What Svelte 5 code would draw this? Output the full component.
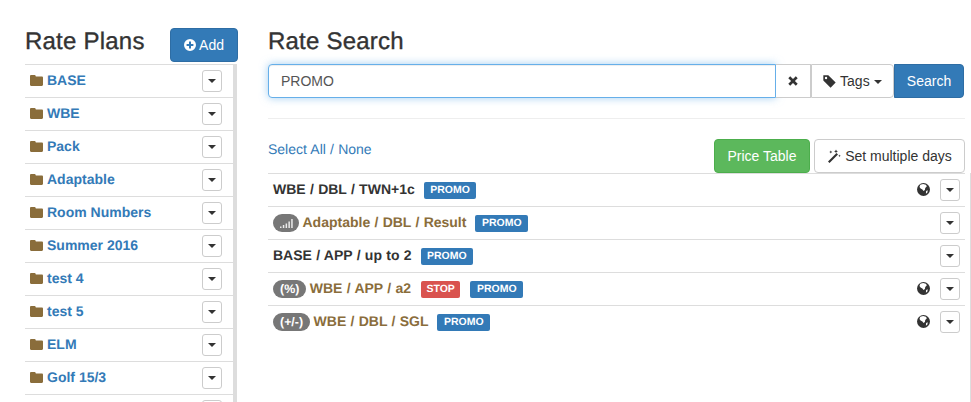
<script lang="ts">
	// last row is only peeking in at the bottom, its name is out of view
	const plans = ['BASE', 'WBE', 'Pack', 'Adaptable', 'Room Numbers', 'Summer 2016', 'test 4', 'test 5', 'ELM', 'Golf 15/3', ''];

	interface Rate {
		name: string;
		pill?: string;
		bars?: boolean;
		stop?: boolean;
		globe?: boolean;
	}

	const rates: Rate[] = [
		{ name: 'WBE / DBL / TWN+1c', globe: true },
		{ name: 'Adaptable / DBL / Result', bars: true },
		{ name: 'BASE / APP / up to 2' },
		{ name: 'WBE / APP / a2', pill: '(%)', stop: true, globe: true },
		{ name: 'WBE / DBL / SGL', pill: '(+/-)', globe: true }
	];
</script>

{#snippet caretButton()}
	<button class="caret-btn" aria-label="More"><span class="caret"></span></button>
{/snippet}

<main>
	<aside>
		<div class="side-head">
			<h2>Rate Plans</h2>
			<button class="btn primary add">
				<svg viewBox="0 0 12 12" width="12" height="12"><path fill="#fff" fill-rule="evenodd" d="M6 0a6 6 0 1 0 0 12A6 6 0 0 0 6 0zM5 2.6h2V5h2.4v2H7v2.4H5V7H2.6V5H5z" /></svg>
				Add
			</button>
		</div>
		<div class="plans-wrap">
			<ul class="plans">
				{#each plans as plan}
					<li>
						{#if plan}
							<svg class="folder" viewBox="0 0 13 11" width="13" height="11"><path fill="#8a6d3b" d="M1.2 0h3.4c.6 0 1 .4 1.1 1l.1.4h6c.7 0 1.2.5 1.2 1.2v7.2c0 .7-.5 1.2-1.2 1.2H1.2C.5 11 0 10.500 0 9.800V1.200C0 .5.500 0 1.200 0z" /></svg>
							<a href="#plan">{plan}</a>
						{/if}
						<span class="spacer"></span>
						{@render caretButton()}
					</li>
				{/each}
			</ul>
		</div>
	</aside>

	<section>
		<h2>Rate Search</h2>
		<div class="search">
			<input type="text" value="PROMO" />
			<button class="btn addon clear" aria-label="Clear">
				<svg viewBox="0 0 10 10" width="10" height="10"><path fill="#333" d="M2.200.3 5 3.100 7.800.3 9.700 2.200 6.900 5l2.800 2.800-1.900 1.900L5 6.900 2.200 9.700.3 7.800 3.100 5 .3 2.200z" /></svg>
			</button>
			<button class="btn addon tags">
				<svg viewBox="0 0 12 12" width="13" height="13"><path fill="#333" fill-rule="evenodd" d="M.3.3h4.600L11.700 7 7 11.700.3 5zM2.800 1.700a1.100 1.100 0 1 0 0 2.200 1.100 1.100 0 0 0 0-2.200z" /></svg>
				Tags <span class="caret"></span>
			</button>
			<button class="btn primary go">Search</button>
		</div>
		<hr />
		<div class="tools">
			<div class="select"><a href="#all">Select All</a> / <a href="#none">None</a></div>
			<div class="actions">
				<button class="btn success">Price Table</button>
				<button class="btn plain">
					<svg viewBox="0 0 14 14" width="14" height="14"><path fill="#333" d="M9.500 4 11 5.500 2.500 14 1 12.500zM9 .5l.6 1.300 1.300.6-1.300.6L9 4.300l-.6-1.300-1.300-.6 1.300-.6zM3.800 1.500l.5 1 1 .5-1 .5-.5 1-.5-1-1-.5 1-.5zM12.500 5.500l.4.900.9.400-.9.400-.4.900-.4-.9-.9-.4.9-.4z" /></svg>
					Set multiple days
				</button>
			</div>
		</div>
		<div class="rates-wrap">
			<ul class="rates">
				{#each rates as rate}
					<li>
						{#if rate.bars}
							<span class="pill bars">
								<svg viewBox="0 0 13 9" width="13" height="9"><path fill="#fff" opacity=".85" d="M0 7.500h1.500V9H0zM2.800 6h1.500v3H2.800zM5.600 4.500h1.500V9H5.600zM8.400 2.500h1.500V9H8.400zM11.200 0h1.500v9h-1.500z" /></svg>
							</span>
						{:else if rate.pill}
							<span class="pill">{rate.pill}</span>
						{/if}
						<b class:derived={rate.bars || rate.pill}>{rate.name}</b>
						{#if rate.stop}<span class="label danger">STOP</span>{/if}
						<span class="label info">PROMO</span>
						<span class="spacer"></span>
						{#if rate.globe}
							<svg class="globe" viewBox="0 0 12 12" width="13" height="13"><circle cx="6" cy="6" r="6" fill="#333" /><path fill="#fff" d="M3 1.700 5.600 1l2.600.6.900 1.500-1.500 1.600-.3 1.800-1.300.8-1-1.300L3.300 5 2.300 3.600zM8.400 7.400l1.500-.6-.3 1.900-1.400 1.200z" /></svg>
						{/if}
						{@render caretButton()}
					</li>
				{/each}
			</ul>
		</div>
	</section>
</main>

<style>
	:global(body) {
		margin: 0;
		background: #fff;
		overflow: hidden;
	}

	main {
		display: flex;
		height: 402px;
		overflow: hidden;
		padding: 28px 6px 0 25px;
		box-sizing: border-box;
		font-family: 'Liberation Sans', Arial, sans-serif;
		font-size: 14px;
		line-height: 20px;
		color: #333;
		text-rendering: geometricPrecision;
	}

	h2 {
		margin: 0;
		font-size: 24px;
		font-weight: 500;
		line-height: 28px;
		letter-spacing: 0.22px;
		-webkit-text-stroke: 0.35px #333;
	}

	aside {
		width: 213px;
		flex: none;
	}

	.side-head {
		display: flex;
		justify-content: space-between;
		height: 36px;
	}

	.plans-wrap {
		width: 212px;
		border-right: 4px solid #ddd;
		box-sizing: border-box;
	}

	ul {
		list-style: none;
		margin: 0;
		padding: 0;
	}

	.plans li {
		display: flex;
		align-items: center;
		height: 33px;
		box-sizing: border-box;
		border-top: 1px solid #ddd;
		padding: 0 11px 0 5px;
	}

	.plans li a {
		margin-left: 4px;
		color: #337ab7;
		font-weight: 700;
		text-decoration: none;
		position: relative;
		top: -1px;
	}

	.folder {
		position: relative;
		top: -1px;
	}

	.spacer {
		flex: 1;
	}

	.btn {
		font: inherit;
		border: 1px solid transparent;
		border-radius: 4px;
		padding: 6px 12px;
		height: 34px;
		box-sizing: border-box;
		white-space: nowrap;
	}

	.primary {
		background: #337ab7;
		border-color: #2e6da4;
		color: #fff;
	}

	.add {
		width: 68px;
		padding: 0;
	}

	.add svg {
		vertical-align: -1px;
	}

	.success {
		background: #5cb85c;
		border-color: #4cae4c;
		color: #fff;
		width: 96px;
		padding: 0;
	}

	.plain {
		background: #fff;
		border-color: #ccc;
		color: #333;
		width: 151px;
		padding: 0;
	}

	.plain svg {
		vertical-align: -2px;
	}

	.caret-btn {
		width: 20px;
		height: 22px;
		padding: 0;
		background: #fff;
		border: 1px solid #ccc;
		border-radius: 3px;
		display: flex;
		align-items: center;
		justify-content: center;
	}

	.caret {
		display: inline-block;
		width: 0;
		height: 0;
		vertical-align: middle;
		border-top: 4px solid #333;
		border-left: 4px solid transparent;
		border-right: 4px solid transparent;
	}

	section {
		margin-left: 30px;
		width: 697px;
		flex: none;
		display: flex;
		flex-direction: column;
	}

	section h2 {
		height: 36px;
		flex: none;
	}

	.search {
		display: flex;
		height: 34px;
		padding-right: 1px;
		flex: none;
	}

	input {
		flex: 1;
		min-width: 0;
		height: 34px;
		box-sizing: border-box;
		padding: 6px 12px;
		font: inherit;
		color: #555;
		border: 1px solid #66afe9;
		border-radius: 4px 0 0 4px;
		box-shadow: inset 0 1px 1px rgba(0, 0, 0, 0.075), 0 0 8px rgba(102, 175, 233, 0.6);
		outline: none;
	}

	.addon {
		background: #fff;
		border-color: #ccc;
		border-left: none;
		border-radius: 0;
		color: #333;
		padding: 0;
	}

	.clear {
		width: 35px;
	}

	.tags {
		width: 83px;
		border-left: 1px solid #ccc;
		border-radius: 0 4px 4px 0;
	}

	.tags svg {
		vertical-align: -2px;
	}

	.go {
		width: 70px;
		padding: 0;
		border-radius: 0 4px 4px 0;
	}

	hr {
		margin: 20px 0 0;
		border: none;
		border-top: 1px solid #eee;
		height: 0;
		width: 100%;
		flex: none;
	}

	.tools {
		display: flex;
		justify-content: space-between;
		height: 54px;
		padding-top: 20px;
		box-sizing: border-box;
		flex: none;
	}

	.select {
		color: #337ab7;
		word-spacing: 0.3px;
	}

	.select a {
		color: #337ab7;
		text-decoration: none;
	}

	.actions {
		display: flex;
		gap: 4px;
	}

	.rates-wrap {
		flex: 1;
		margin-right: -6px;
		padding-right: 5px;
		border-right: 1px solid #ddd;
	}

	.rates li {
		display: flex;
		align-items: center;
		height: 33px;
		box-sizing: border-box;
		border-top: 1px solid #ddd;
		padding: 0 5px;
	}

	.rates b {
		position: relative;
		top: -1px;
		word-spacing: 0.4px;
	}

	.derived {
		color: #8a6d3b;
	}

	.pill {
		background: #777;
		color: #fff;
		font-size: 12.4px;
		font-weight: 700;
		line-height: 12px;
		border-radius: 10px;
		padding: 3px 7px;
		margin-right: 3.5px;
		height: 18px;
		box-sizing: border-box;
		display: flex;
		align-items: center;
	}

	.bars {
		width: 26px;
		padding: 0;
		justify-content: center;
	}

	.label {
		font-size: 10.5px;
		font-weight: 700;
		line-height: 11px;
		color: #fff;
		border-radius: 2px;
		padding: 3px 6.5px;
		margin-left: 9px;
		height: 17px;
		box-sizing: border-box;
	}

	.info {
		background: #337ab7;
	}

	.danger {
		background: #d9534f;
		padding: 3px 5.5px;
		margin-left: 10px;
		margin-right: 1px;
	}

	.globe {
		margin-right: 10px;
		position: relative;
		top: -1px;
	}
</style>
